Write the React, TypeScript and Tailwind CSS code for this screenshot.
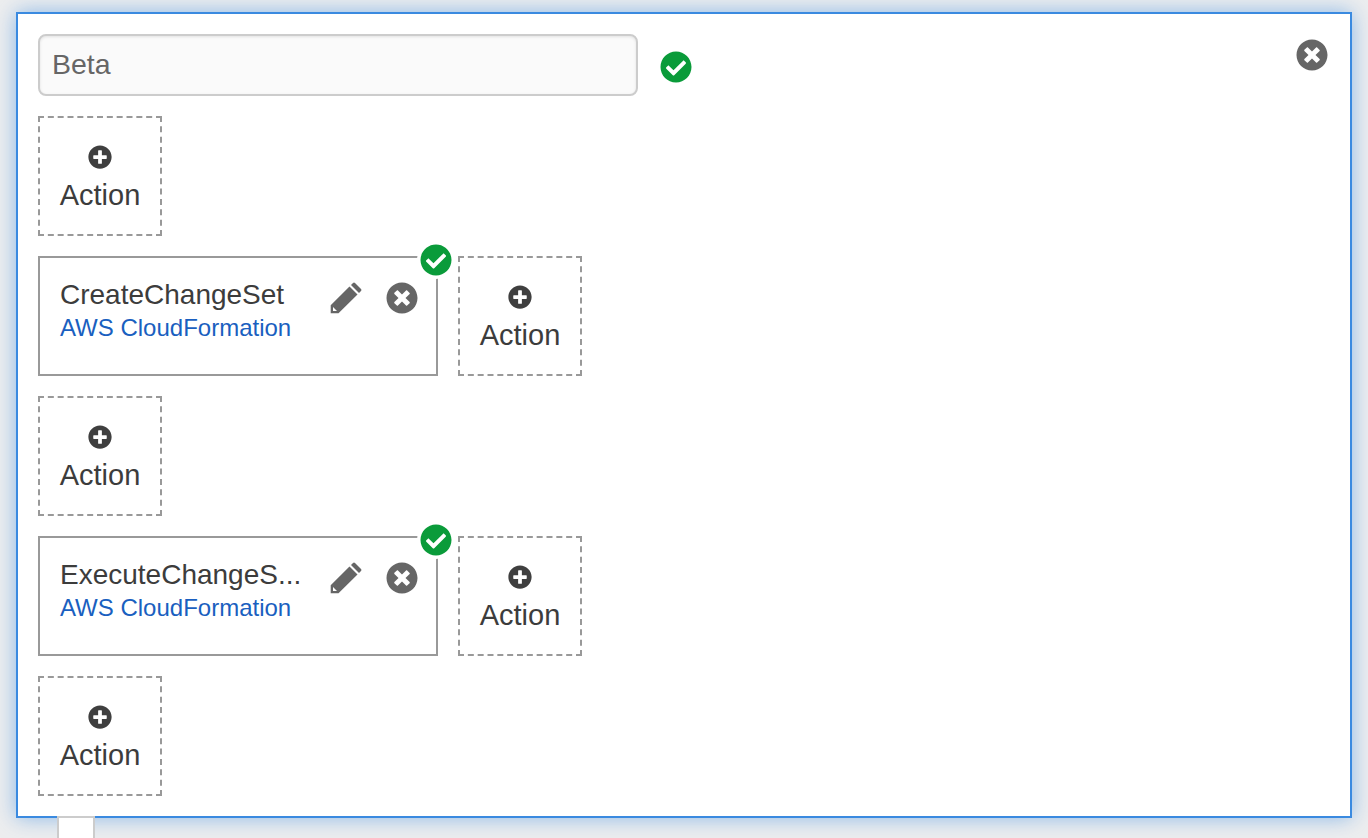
import { FaCheckCircle, FaPlusCircle, FaTimesCircle } from 'react-icons/fa';

const PencilIcon = () => {
  return (
    <svg viewBox="0 0 32 32" className="ml-[30px] mt-[6px] h-8 w-8 shrink-0 fill-[#666]">
      <path d="M19.5 4.5 27.5 12.5 8.5 31.3H.7V23.3Z M3 25V29H7Z" fillRule="evenodd" />
      <path d="M21 3 23 1Q24 0 25 1L31 7Q32 8 31 9L29 11Z" />
    </svg>
  );
};

const AddAction = () => {
  return (
    <div className="flex h-[120px] w-[124px] flex-col items-center border-2 border-dashed border-[#999] pt-[27px]">
      <FaPlusCircle className="h-6 w-6 text-[#3f3f3f]" />
      <span className="mt-[6px] text-[29px] leading-[40px] text-[#3c3c3c]">Action</span>
    </div>
  );
};

const ActionCard = ({ name }: { name: string }) => {
  return (
    <div className="flex gap-5">
      <div className="relative flex h-[120px] w-[400px] border-2 border-[#999] pl-5 pt-[19px]">
        <div className="w-[240px]">
          <div className="whitespace-nowrap text-[28px] leading-[36px] text-[#3c3c3c]">{name}</div>
          <div className="whitespace-nowrap text-[24px] leading-[30px] text-[#1a5fc0]">AWS CloudFormation</div>
        </div>
        <div className="-mt-px flex">
          <PencilIcon />
          <FaTimesCircle className="ml-6 mt-[6px] h-8 w-8 text-[#666]" />
        </div>
        <div className="absolute -right-[19px] -top-[17px] rounded-full bg-white p-[3px]">
          <FaCheckCircle className="h-8 w-8 text-[#0a9b3a]" />
        </div>
      </div>
      <AddAction />
    </div>
  );
};

export default function App() {
  return (
    <div className="h-[838px] overflow-hidden bg-[#edeeef] pl-4 pt-3 font-['Liberation_Sans',sans-serif]">
      <div className="h-[806px] w-[1336px] border-2 border-[#3a8ae0] bg-white p-5 shadow-[0_0_20px_rgba(58,138,224,0.55)]">
        <div className="flex flex-col gap-5">
          <div className="flex">
            <div className="flex h-[62px] w-[600px] items-center rounded-lg border-2 border-[#ccc] bg-[#fafafa] px-[12px] pb-[2px] text-[28.5px] text-[#666] shadow-[inset_0_1px_3px_rgba(0,0,0,0.1)]">
              Beta
            </div>
            <FaCheckCircle className="ml-[22px] mt-[17px] h-8 w-8 text-[#0a9b3a]" />
            <FaTimesCircle className="ml-auto mr-[2px] mt-[5px] h-8 w-8 text-[#666]" />
          </div>
          <AddAction />
          <ActionCard name="CreateChangeSet" />
          <AddAction />
          <ActionCard name="ExecuteChangeS..." />
          <AddAction />
        </div>
      </div>
      <div className="relative -mt-[2px] ml-[41px] h-7 w-[38px] border-x-2 border-t-2 border-[#ccc] bg-white" />
    </div>
  );
}
